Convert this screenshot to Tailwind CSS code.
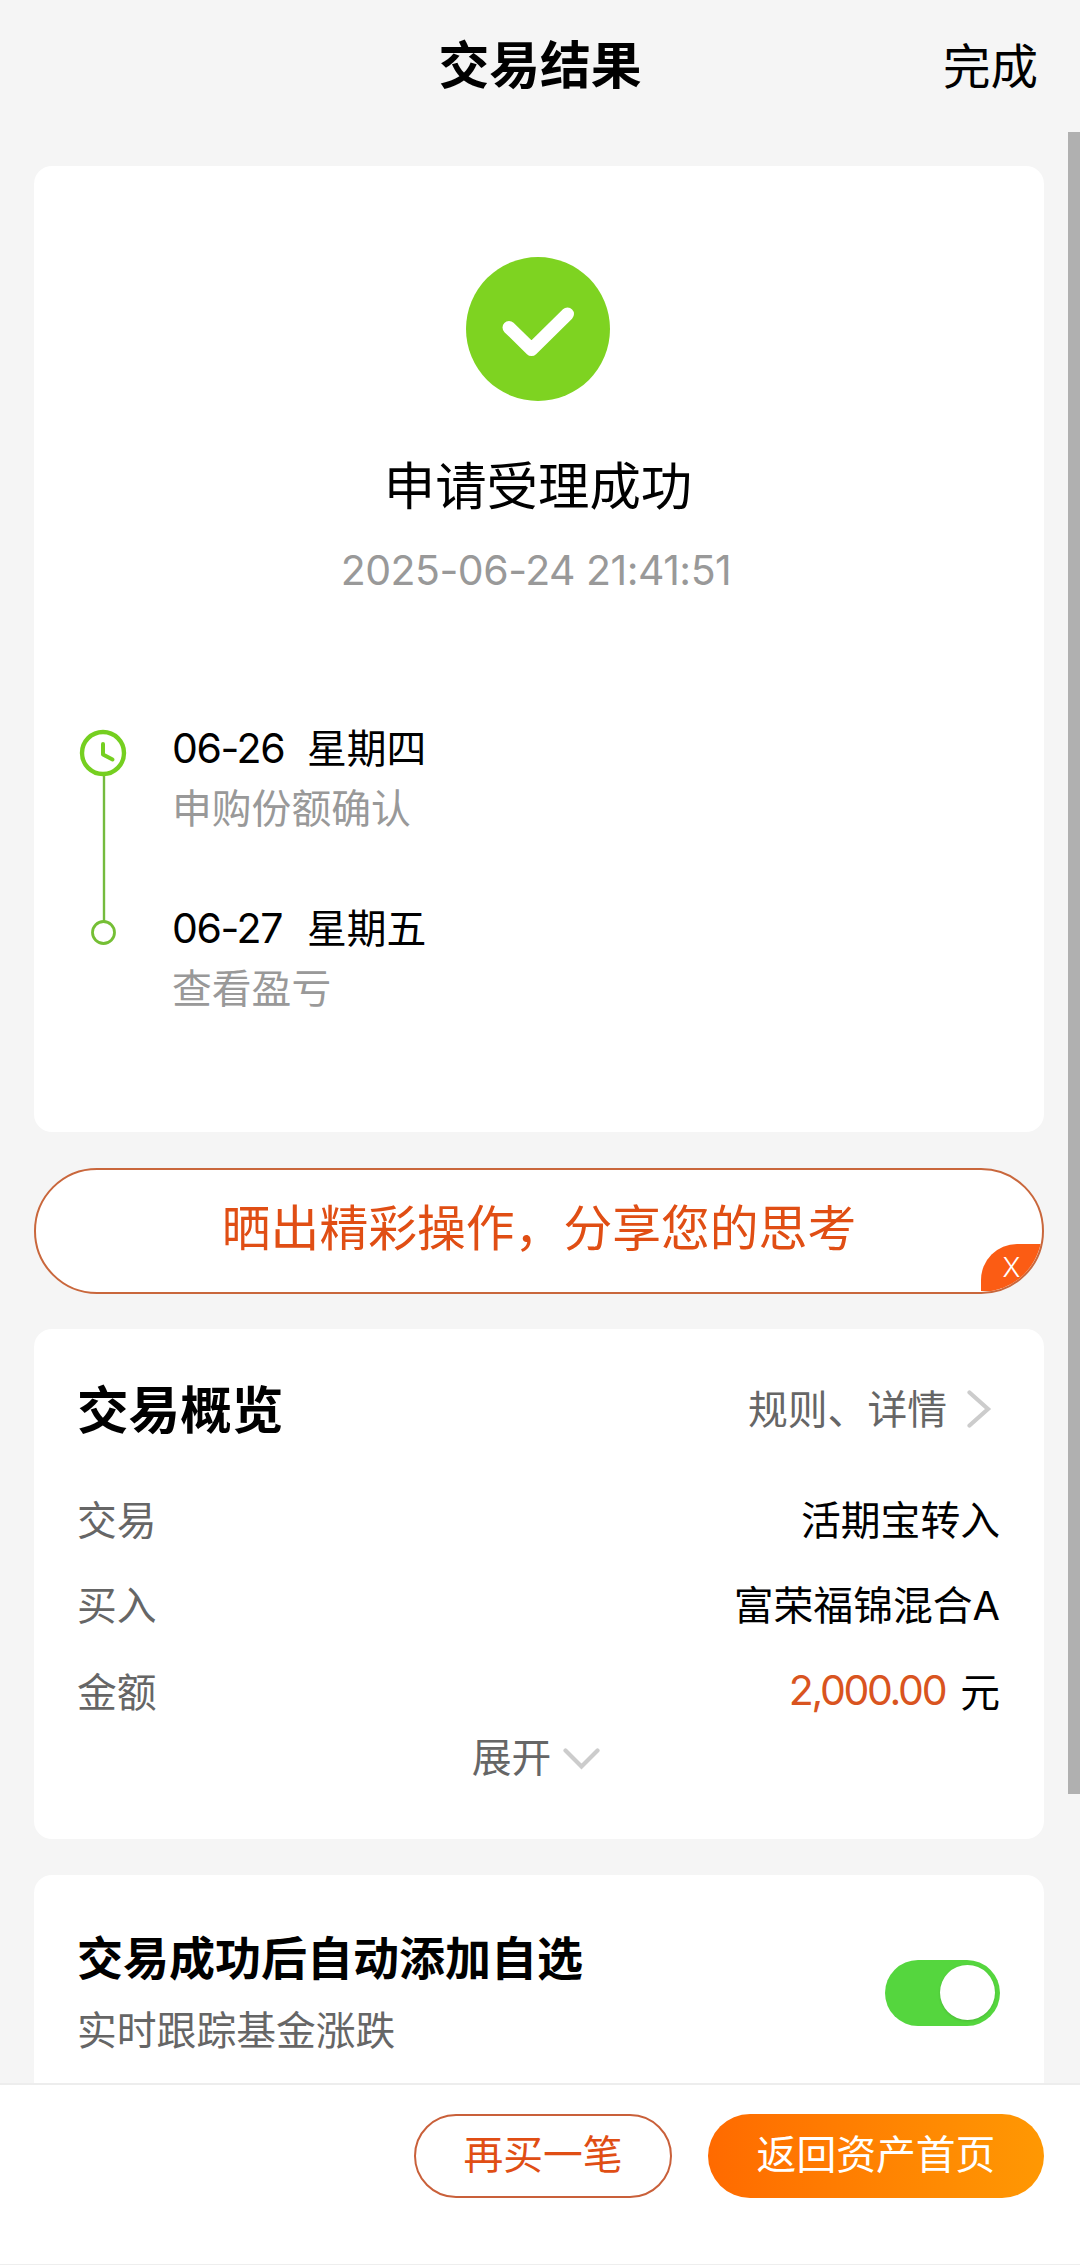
<!DOCTYPE html>
<html lang="zh-CN">
<head>
    <meta charset="UTF-8">
    <meta name="viewport" content="width=device-width, initial-scale=1.0">
    <title>交易结果</title>
    <script src="https://cdn.jsdelivr.net/npm/@tailwindcss/browser@4"></script>
</head>
<body class="bg-[#f5f5f5] font-['Noto_Sans_CJK_SC',sans-serif] text-black">
    <div class="relative flex h-[2265px] w-[1080px] flex-col overflow-hidden text-[39.8px] leading-[60px]">
        <!-- Header -->
        <header class="grid h-[132px] shrink-0 grid-cols-3 items-center pr-[42px]">
            <span></span>
            <h1 class="pb-[9px] pl-[42px] text-center text-[50.8px] font-bold">交易结果</h1>
            <button class="pb-[5px] text-right text-[47.5px]">完成</button>
        </header>

        <!-- Scrollable content -->
        <main class="flex grow flex-col overflow-hidden px-[34px] pr-9 pt-[34px]">
            <!-- Result -->
            <section class="flex h-[966px] shrink-0 flex-col rounded-[18px] bg-white pt-[91px]">
                <div class="flex flex-col items-center pr-[2px]">
                    <svg class="size-[144px]" viewBox="0 0 144 144" fill="none">
                        <circle cx="72" cy="72" r="72" fill="#7ed321"/>
                        <path d="M43 70.5L65.5 92.5L101.5 57" stroke="#fff" stroke-width="13" stroke-linecap="round" stroke-linejoin="round"/>
                    </svg>
                    <h2 class="mt-[52px] text-[51.4px]">申请受理成功</h2>
                    <p class="mt-[27px] pr-1 font-[Inter] text-[41px] tracking-[-0.5px] text-[#999]">2025-06-24 21:41:51</p>
                </div>

                <div class="mt-[116px] flex pl-[44px]">
                    <svg class="mt-2.5 h-[220px] w-[50px]" viewBox="0 0 50 220" fill="none">
                        <path d="M26 49V195" stroke="#74bb3e" stroke-width="2.4"/>
                        <circle cx="25" cy="27" r="21" stroke="#75cf20" stroke-width="4.4"/>
                        <path d="M25 18V28.5L34.500 33.500" stroke="#75cf20" stroke-width="4" stroke-linecap="round" stroke-linejoin="round"/>
                        <circle cx="25.500" cy="206.500" r="11" fill="#fff" stroke="#75bf35" stroke-width="2.8"/>
                    </svg>
                    <ul class="flex flex-col gap-[60px] pl-[44px]">
                        <li>
                            <p class="flex"><span class="w-[135px] pt-0.5 font-[Inter] text-[41px] tracking-[-1.4px]">06-26</span>星期四</p>
                            <p class="-mt-0.5 mb-0.5 text-[#999]">申购份额确认</p>
                        </li>
                        <li>
                            <p class="-mt-0.5 flex"><span class="w-[135px] pt-0.5 font-[Inter] text-[41px] tracking-[-1.4px]">06-27</span>星期五</p>
                            <p class="-mt-0.5 text-[#999]">查看盈亏</p>
                        </li>
                    </ul>
                </div>
            </section>

            <!-- Share banner -->
            <section class="relative mt-9 flex h-[126px] shrink-0 items-center justify-center overflow-hidden rounded-full border-2 border-[#c9673c] bg-white pb-3">
                <span class="text-[48.8px] text-[#e04e14]">晒出精彩操作，分享您的思考</span>
                <button class="absolute right-0 bottom-px h-[47px] w-[61px] rounded-tl-[36px] bg-[#fb5c14] font-[Inter] text-[27px] leading-[48px] font-light text-white">X</button>
            </section>

            <!-- Overview -->
            <section class="mt-[35px] flex h-[510px] shrink-0 flex-col rounded-[18px] bg-white pr-11 pl-[43px] pt-[48px]">
                <div class="flex items-center justify-between">
                    <h2 class="text-[51.6px] font-bold">交易概览</h2>
                    <a class="flex items-center text-[#666]">规则、详情
                        <svg class="mt-1 mr-2 ml-5 h-[38px] w-[25px]" viewBox="0 0 25 38" fill="none">
                            <path d="M2.500 2.500L21 19L2.500 35.500" stroke="#ccc" stroke-width="4.2" stroke-linecap="round"/>
                        </svg>
                    </a>
                </div>
                <dl class="mt-[51px] flex flex-col gap-[24.5px]">
                    <div class="flex justify-between"><dt class="text-[#666]">交易</dt><dd>活期宝转入</dd></div>
                    <div class="flex justify-between"><dt class="text-[#666]">买入</dt><dd>富荣福锦混合<span class="font-[Inter]">A</span></dd></div>
                    <div class="flex justify-between"><dt class="text-[#666]">金额</dt><dd class="flex gap-[15px]"><span class="font-[Inter] text-[41px] tracking-[-2.3px] text-[#d95420]">2,000.00</span>元</dd></div>
                </dl>
                <button class="mt-[5px] flex items-center justify-center pr-[5px] text-[#666]">展开
                    <svg class="mt-2 ml-3 h-[22px] w-[37px]" viewBox="0 0 37 22" fill="none">
                        <path d="M2.500 2.500L18.500 18.500L34.500 2.500" stroke="#ccc" stroke-width="4.2" stroke-linecap="round"/>
                    </svg>
                </button>
            </section>

            <!-- Auto follow -->
            <section class="mt-9 flex h-[240px] shrink-0 justify-between rounded-t-[18px] bg-white pr-11 pl-[43px] pt-[50px]">
                <div>
                    <h3 class="text-[46px] font-bold">交易成功后自动添加自选</h3>
                    <p class="mt-[13px] text-[#666]">实时跟踪基金涨跌</p>
                </div>
                <button class="mt-[35px] flex h-[66px] w-[115px] items-start justify-end rounded-full bg-[#55d63e] p-[5px]">
                    <span class="size-[55px] rounded-full bg-white shadow"></span>
                </button>
            </section>
        </main>

        <!-- Bottom actions -->
        <footer class="flex h-[182px] shrink-0 items-start justify-end gap-9 border-t-2 border-b border-t-[#ededed] border-b-[#eee] bg-white pt-[29px] pr-9">
            <button class="h-[84px] w-[258px] rounded-full border-2 border-[#c9603a] pb-[9px] text-[#e04e14]">再买一笔</button>
            <button class="h-[84px] w-[336px] rounded-full bg-linear-to-r from-[#ff6a00] to-[#ff9803] pb-2 text-white">返回资产首页</button>
        </footer>

        <!-- Scrollbar thumb -->
        <div class="absolute top-[132px] right-0 h-[1662px] w-[12px] bg-[#b0b0b0]"></div>
    </div>
</body>
</html>
